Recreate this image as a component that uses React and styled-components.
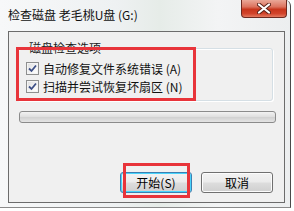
import React from 'react';
import styled, { createGlobalStyle } from 'styled-components';

const GlobalStyle = createGlobalStyle`
  html, body {
    margin: 0;
    padding: 0;
    background: #ffffff;
  }
  body {
    font-family: "Noto Sans CJK SC", "Liberation Sans", sans-serif;
    font-size: 12px;
    color: #000;
  }
`;

function CheckBox() {
  return (
    <BoxStyle>
      <svg width="9" height="9" viewBox="0 0 9 9">
        <path d="M1 4.5 L3.5 7 L8 1.5" fill="none" stroke="#3d4f86" strokeWidth="1.8" />
      </svg>
    </BoxStyle>
  );
}

function App() {
  return (
    <>
      <GlobalStyle />
      <WindowStyle>
        <TitleBar>
          <TitleText>检查磁盘 老毛桃U盘 (G:)</TitleText>
          <CloseButton>
            <svg width="14" height="11" viewBox="0 0 14 11">
              <path d="M2 1.5 L12 9.5 M12 1.5 L2 9.5" stroke="#5a2218" strokeWidth="4" strokeLinecap="round" />
              <path d="M2 1.5 L12 9.5 M12 1.5 L2 9.5" stroke="#ffffff" strokeWidth="2.2" strokeLinecap="round" />
            </svg>
          </CloseButton>
        </TitleBar>
        <ClientArea>
          <GroupBox>
            <Legend>磁盘检查选项</Legend>
            <OptionRow>
              <CheckBox />
              <span>自动修复文件系统错误 (A)</span>
            </OptionRow>
            <OptionRow>
              <CheckBox />
              <span>扫描并尝试恢复坏扇区 (N)</span>
            </OptionRow>
          </GroupBox>
          <ProgressBar />
          <ButtonRow>
            <DialogButton $focused>开始(S)</DialogButton>
            <DialogButton>取消</DialogButton>
          </ButtonRow>
        </ClientArea>
        <Annotation $left={16} $top={47} $width={180} $height={54} />
        <Annotation $left={123} $top={163} $width={67} $height={35} />
      </WindowStyle>
    </>
  );
}

export default App;

const WindowStyle = styled.div`
  position: relative;
  width: 291px;
  height: 208px;
  display: flex;
  flex-direction: column;
  background: linear-gradient(90deg, #f7f8f9 0%, #eef1f2 40%, #e6ece8 55%, #f3f4f5 75%, #eceeef 100%);
  border-right: 1px solid #4a4a4a;
  border-bottom: 1px solid #8a8a8a;
  border-top-right-radius: 6px;
  box-sizing: border-box;
`;

const TitleBar = styled.div`
  height: 31px;
  display: flex;
  align-items: flex-start;
  justify-content: space-between;
  padding-left: 8px;
`;

const TitleText = styled.div`
  font-size: 12px;
  line-height: 14px;
  margin-top: 8px;
  color: #111;
`;

const CloseButton = styled.div`
  width: 46px;
  height: 18px;
  margin-right: 3px;
  box-sizing: border-box;
  border: 1px solid #6e2a20;
  border-top: none;
  border-radius: 0 0 4px 4px;
  background: linear-gradient(180deg, #eaa898 0%, #dc735e 40%, #c8361c 55%, #d2442b 80%, #e47a60 100%);
  display: flex;
  align-items: center;
  justify-content: center;
`;

const ClientArea = styled.div`
  flex: 1;
  margin: 0 5px 4px 8px;
  background: #f0f0f0;
  border: 1px solid #6c6c6c;
  display: flex;
  flex-direction: column;
  padding: 9px 11px 9px 8px;
`;

const GroupBox = styled.fieldset`
  margin: 0;
  padding: 7px 0 7px 8px;
  box-sizing: border-box;
  border: 1px solid #d5dfe5;
  border-radius: 3px;
  box-shadow: inset 1px 1px 0 #ffffff, 1px 1px 0 #ffffff;
  display: flex;
  flex-direction: column;
  gap: 5px;
`;

const Legend = styled.legend`
  padding: 0 3px;
  margin-left: 0;
  font-size: 12px;
  line-height: 14px;
  color: #1a1a1a;
`;

const OptionRow = styled.div`
  display: flex;
  align-items: center;
  gap: 4px;
  height: 13px;
  line-height: 13px;
  font-size: 12px;
  color: #111;
  white-space: nowrap;
`;

const BoxStyle = styled.div`
  width: 13px;
  height: 13px;
  box-sizing: border-box;
  border: 1px solid #8e8f8f;
  background: linear-gradient(135deg, #dcdcdc 0%, #f6f6f6 60%, #ffffff 100%);
  box-shadow: inset 0 0 0 1px #f4f4f4;
  display: flex;
  align-items: center;
  justify-content: center;
  flex-shrink: 0;
`;

const ProgressBar = styled.div`
  margin-top: 10px;
  margin-left: 2px;
  margin-right: -3px;
  height: 12px;
  box-sizing: border-box;
  border: 1px solid #8b8b8b;
  border-radius: 3px;
  background: linear-gradient(180deg, #f2f2f2 0%, #e0e0e0 45%, #d2d2d2 55%, #e4e4e4 100%);
`;

const ButtonRow = styled.div`
  margin-top: auto;
  display: flex;
  justify-content: flex-end;
  gap: 9px;
`;

const DialogButton = styled.div`
  width: 72px;
  height: 21px;
  box-sizing: border-box;
  border: 1px solid ${(p) => (p.$focused ? '#3c7fb1' : '#707070')};
  border-radius: 3px;
  background: linear-gradient(180deg, #f2f2f2 0%, #ebebeb 48%, #dddddd 52%, #cfcfcf 100%);
  box-shadow: inset 0 0 0 1px ${(p) => (p.$focused ? '#48d3fb' : '#fcfcfc')};
  display: flex;
  align-items: center;
  justify-content: center;
  font-size: 12px;
  color: #000;
`;

const Annotation = styled.div`
  position: absolute;
  left: ${(p) => p.$left}px;
  top: ${(p) => p.$top}px;
  width: ${(p) => p.$width}px;
  height: ${(p) => p.$height}px;
  box-sizing: border-box;
  border: 3px solid #e8343a;
  pointer-events: none;
`;
